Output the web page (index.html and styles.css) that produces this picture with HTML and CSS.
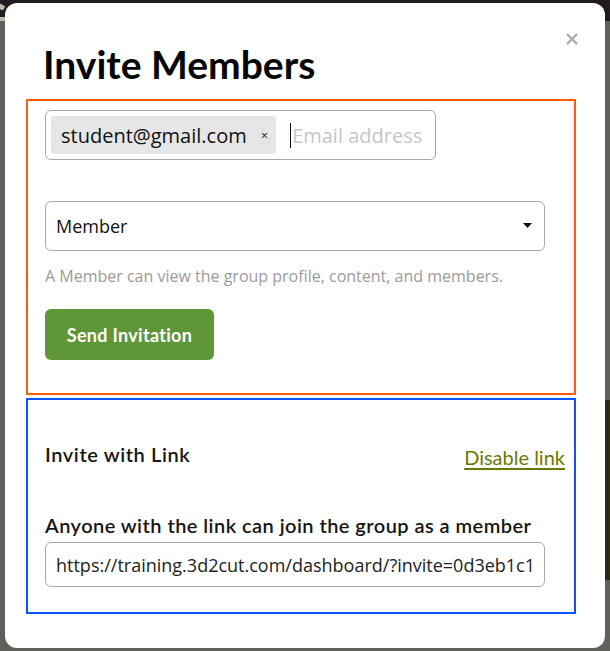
FILE: index.html
```html
<!DOCTYPE html>
<html lang="en">
<head>
<meta charset="utf-8">
<title>Invite Members</title>
<link rel="stylesheet" href="styles.css">
</head>
<body>
<div class="page">
  <header class="topbar"><span class="topbar-title">Group</span></header>
  <main class="backdrop">
    <div class="side-card"></div>
  </main>
</div>

<div class="modal" role="dialog" aria-labelledby="modal-title">
  <button class="close" aria-label="Close">
    <svg width="12" height="12" viewBox="0 0 12 12"><path d="M1 1 L11 11 M11 1 L1 11" stroke="#ababab" stroke-width="2.4" stroke-linecap="butt"/></svg>
  </button>
  <h1 class="title" id="modal-title">Invite Members</h1>

  <section class="box box-invite">
    <div class="email-field">
      <span class="chip">student@gmail.com<span class="chip-x">×</span></span>
      <span class="caret"></span><span class="placeholder">Email address</span>
    </div>
    <div class="select">
      <span class="select-value">Member</span>
      <svg class="select-arrow" width="9" height="5" viewBox="0 0 9 5"><path d="M0 0 H9 L4.5 5 Z" fill="#111"/></svg>
    </div>
    <p class="help">A Member can view the group profile, content, and members.</p>
    <button class="btn-send">Send Invitation</button>
  </section>

  <section class="box box-link">
    <div class="link-head">
      <h2 class="link-title">Invite with Link</h2>
      <a class="disable-link" href="#">Disable link</a>
    </div>
    <label class="link-label">Anyone with the link can join the group as a member</label>
    <div class="url-field">https://training.3d2cut.com/dashboard/?invite=0d3eb1c1</div>
  </section>
</div>
</body>
</html>
```
FILE: styles.css
```css
* { box-sizing: border-box; }
html, body { margin: 0; padding: 0; }
body {
  width: 610px;
  height: 651px;
  overflow: hidden;
  background: #5e605a;
  font-family: "Open Sans", "Liberation Sans", sans-serif;
  position: relative;
}

.page { display: flex; flex-direction: column; height: 100%; }
.topbar {
  height: 21px;
  background: #221b1f;
  overflow: hidden;
  display: flex;
  align-items: flex-end;
}
.topbar-title {
  font-family: Lato, sans-serif;
  font-weight: 700;
  font-size: 40px;
  color: #b9b6b4;
  line-height: 1;
  margin-bottom: -16px;
  margin-left: -22px;
}
.backdrop {
  flex: 1;
  display: flex;
  justify-content: flex-end;
  padding-top: 379px;
}
.side-card {
  width: 120px;
  height: 180px;
  background: #2b2a12;
}

.modal {
  position: absolute;
  left: 5px;
  top: 3px;
  width: 600px;
  height: 645px;
  background: #fff;
  border-radius: 12px;
  padding: 38px 0 0 21px;
}

.close {
  position: absolute;
  top: 30px;
  right: 27px;
  width: 12px;
  height: 12px;
  padding: 0;
  border: 0;
  background: none;
  display: block;
}
.close svg { display: block; }

.title {
  margin: 0 0 11px 17px;
  font-family: Lato, sans-serif;
  font-weight: 700;
  font-size: 39px;
  line-height: 47px;
  color: #050505;
}

.box {
  width: 550px;
  border: 2px solid;
}
.box-invite {
  border-color: #ff5c0a;
  padding: 9px 29px 33px 17px;
}
.box-link {
  border-color: #0b55ff;
  margin-top: 3px;
  padding: 42px 9px 25px 17px;
}

.email-field {
  width: 391px;
  height: 50px;
  border: 1px solid #a9a9a9;
  border-radius: 6px;
  padding: 5px;
  display: flex;
  align-items: center;
}
.chip {
  height: 38px;
  background: #e6e6e6;
  border-radius: 3px;
  display: flex;
  align-items: center;
  padding: 0 8px 0 10px;
  font-size: 20px;
  color: #111;
  white-space: nowrap;
}
.chip-x {
  font-size: 13px;
  margin-left: 14px;
  color: #222;
}
.caret {
  width: 1px;
  height: 25px;
  background: #111;
  margin-left: 14px;
  margin-right: 1px;
}
.placeholder {
  font-size: 20px;
  color: #c6c6c6;
  white-space: nowrap;
}

.select {
  margin-top: 41px;
  width: 500px;
  height: 50px;
  border: 1px solid #a9a9a9;
  border-radius: 6px;
  display: flex;
  align-items: center;
  justify-content: space-between;
  padding: 0 12px 0 10px;
}
.select-value { font-size: 18px; color: #111; }
.select-arrow { display: block; margin-top: -2px; }

.help {
  margin: 14px 0 0;
  font-size: 16px;
  line-height: 22px;
  color: #9b9b9b;
}

.btn-send {
  margin-top: 22px;
  width: 169px;
  height: 51px;
  border: 0;
  border-radius: 6px;
  background: #5e9638;
  color: #fff;
  font-family: Lato, sans-serif;
  font-weight: 700;
  font-size: 18px;
  letter-spacing: 0.3px;
  display: block;
}

.link-head {
  display: flex;
  justify-content: space-between;
  align-items: flex-start;
}
.link-title {
  margin: 0;
  font-family: Lato, sans-serif;
  font-weight: 600;
  font-size: 20px;
  line-height: 24px;
  letter-spacing: 0.6px;
  color: #151515;
}
.disable-link {
  margin-top: 3px;
  font-family: Lato, sans-serif;
  font-size: 20px;
  line-height: 24px;
  color: #687a05;
  text-decoration: underline;
  text-underline-offset: 3px;
}
.link-label {
  display: block;
  margin-top: 45px;
  font-family: Lato, sans-serif;
  font-weight: 600;
  font-size: 20px;
  line-height: 23px;
  letter-spacing: 0.45px;
  color: #151515;
}
.url-field {
  margin-top: 5px;
  width: 500px;
  height: 45px;
  border: 1px solid #a9a9a9;
  border-radius: 6px;
  padding: 0 11px 0 10px;
  display: flex;
  align-items: center;
  font-size: 18px;
  color: #222;
  white-space: nowrap;
  overflow: hidden;
}
```
